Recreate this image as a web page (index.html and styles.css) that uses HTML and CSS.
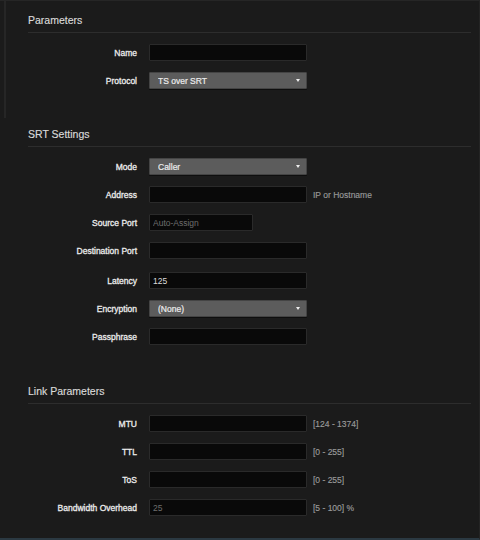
FILE: index.html
```html
<!DOCTYPE html>
<html lang="en">
<head>
    <meta charset="UTF-8">
    <meta name="viewport" content="width=device-width, initial-scale=1.0">
    <title>SRT Output</title>
    <link rel="stylesheet" href="styles.css">
</head>
<body>

<div class="page">

    <!-- General parameters -->
    <div class="group group-first">
        <h2>Parameters</h2>
        <div class="rows">
            <label for="name">Name</label>
            <div class="field"><input type="text" id="name"></div>

            <label for="protocol">Protocol</label>
            <div class="field">
                <div class="select-wrap">
                    <select id="protocol">
                        <option>TS over SRT</option>
                        <option>TS over UDP</option>
                        <option>TS over RTP</option>
                    </select>
                </div>
            </div>
        </div>
    </div>

    <!-- SRT settings -->
    <div class="group">
        <h2>SRT Settings</h2>
        <div class="rows">
            <label for="mode">Mode</label>
            <div class="field">
                <div class="select-wrap">
                    <select id="mode">
                        <option>Caller</option>
                        <option>Listener</option>
                        <option>Rendezvous</option>
                    </select>
                </div>
            </div>

            <label for="address">Address</label>
            <div class="field"><input type="text" id="address"><span class="hint">IP or Hostname</span></div>

            <label for="srcPort">Source Port</label>
            <div class="field"><input type="text" id="srcPort" class="short" placeholder="Auto-Assign"></div>

            <label for="dstPort">Destination Port</label>
            <div class="field"><input type="text" id="dstPort"></div>
        </div>
        <div class="rows rows-more">
            <label for="latency">Latency</label>
            <div class="field"><input type="text" id="latency" value="125"></div>

            <label for="encryption">Encryption</label>
            <div class="field">
                <div class="select-wrap">
                    <select id="encryption">
                        <option>(None)</option>
                        <option>AES-128</option>
                        <option>AES-256</option>
                    </select>
                </div>
            </div>

            <label for="passphrase">Passphrase</label>
            <div class="field"><input type="password" id="passphrase"></div>
        </div>
    </div>

    <!-- Link parameters -->
    <div class="group group-link">
        <h2>Link Parameters</h2>
        <div class="rows">
            <label for="mtu">MTU</label>
            <div class="field"><input type="text" id="mtu"><span class="hint">[124 - 1374]</span></div>

            <label for="ttl">TTL</label>
            <div class="field"><input type="text" id="ttl"><span class="hint">[0 - 255]</span></div>

            <label for="tos">ToS</label>
            <div class="field"><input type="text" id="tos"><span class="hint">[0 - 255]</span></div>

            <label for="overhead">Bandwidth Overhead</label>
            <div class="field"><input type="text" id="overhead" placeholder="25"><span class="hint">[5 - 100] %</span></div>
        </div>
    </div>

</div>

</body>
</html>
```

FILE: styles.css
```css
* {
    margin: 0;
    padding: 0;
    box-sizing: border-box;
}

body {
    font-family: "Liberation Sans", Arial, sans-serif;
    background-color: #1b1b1b;
    color: #dcdcdc;
}

.page {
    width: 480px;
    height: 540px;
    padding: 0 8px 0 4px;
    border-top: 1px solid #262626;
    border-right: 1px solid #242424;
    border-bottom: 2px solid #2b3942;
}

/* One block per settings group */
.group {
    margin-left: 2px;
    padding-left: 22px;
}

.group-first {
    margin-left: 0;
    border-left: 2px solid #262626;
    padding-top: 13px;
    padding-bottom: 29px;
}

.group:not(.group-first) {
    padding-top: 10px;
}

.group-link {
    margin-top: 30px;
}

h2 {
    font-size: 10.5px;
    font-weight: normal;
    line-height: 13px;
    color: #dadada;
    padding-bottom: 5px;
    border-bottom: 1px solid #2d2d2d;
    -webkit-text-stroke: 0.15px #dadada;
}

/* Label / field grid */
.rows {
    display: grid;
    grid-template-columns: 109px 1fr;
    grid-auto-rows: 17px;
    column-gap: 12px;
    row-gap: 11px;
    margin-top: 11px;
}

.rows-more {
    margin-top: 13px;
}

.rows label {
    font-size: 8.5px;
    color: #ececec;
    text-align: right;
    line-height: 16px;
    padding-top: 1px;
    -webkit-text-stroke: 0.3px #ececec;
}

.field {
    display: flex;
    align-items: center;
    gap: 6px;
}

.field input {
    display: block;
    width: 158px;
    height: 17px;
    padding: 0 3px;
    background-color: #090909;
    border: 1px solid #2a2a2a;
    border-radius: 1px;
    color: #dcdcdc;
    font-family: inherit;
    font-size: 8.5px;
    outline: none;
}

.field input.short {
    width: 104px;
}

.field input::placeholder {
    color: #6e6e6e;
}

.hint {
    font-size: 8.5px;
    color: #9a9a9a;
    -webkit-text-stroke: 0.15px #9a9a9a;
}

/* Dropdowns */
.select-wrap {
    position: relative;
    width: 158px;
    height: 17px;
}

.select-wrap select {
    display: block;
    appearance: none;
    -webkit-appearance: none;
    width: 100%;
    height: 100%;
    padding: 0 8px;
    background-color: #5c5c5c;
    border: 1px solid #444;
    border-radius: 1px;
    box-shadow: 0 1px 0 #0e0e0e;
    color: #ececec;
    font-family: inherit;
    font-size: 8.5px;
    outline: none;
    -webkit-text-stroke: 0.2px #ececec;
}

.select-wrap::after {
    content: "";
    position: absolute;
    right: 7px;
    top: 7px;
    border-left: 2.5px solid transparent;
    border-right: 2.5px solid transparent;
    border-top: 3px solid #eeeeee;
    pointer-events: none;
}
```
